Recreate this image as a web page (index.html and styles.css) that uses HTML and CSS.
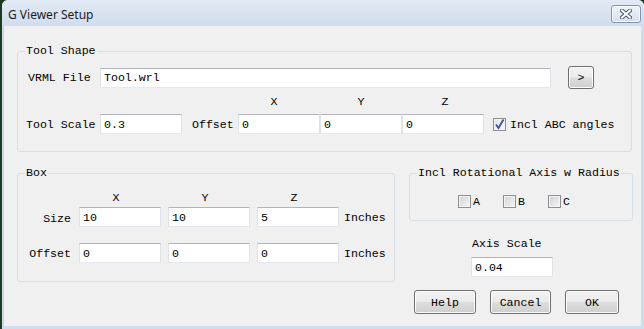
FILE: index.html
```html
<!DOCTYPE html>
<html>
<head>
    <title>G Viewer Setup</title>
    <link rel="stylesheet" href="styles.css">
</head>
<body>
    <div class="window">
        <div class="titlebar">
            <span class="title">G Viewer Setup</span>
            <span class="close">
                <svg width="12" height="10" viewBox="0 0 12 10">
                    <path d="M2 1.5 L10 8.5 M10 1.5 L2 8.5" stroke="#4c5a6c" stroke-width="4" stroke-linecap="square"/>
                    <path d="M2 1.5 L10 8.5 M10 1.5 L2 8.5" stroke="#ffffff" stroke-width="2" stroke-linecap="square"/>
                </svg>
            </span>
        </div>
        <div class="client">
            <fieldset class="group tool-shape">
                <legend>Tool Shape</legend>
                <div class="ts-row ts-file">
                    <label class="ts-label vrml">VRML File</label>
                    <input class="field file-field" type="text" value="Tool.wrl">
                    <button class="btn browse">&gt;</button>
                </div>
                <div class="ts-row ts-head">
                    <span class="ts-spacer"></span>
                    <span class="axis gap5">X</span>
                    <span class="axis gap2">Y</span>
                    <span class="axis">Z</span>
                </div>
                <div class="ts-row">
                    <label class="ts-label">Tool Scale</label>
                    <input class="field" type="text" value="0.3">
                    <label class="offset-label">Offset</label>
                    <input class="field gap5" type="text" value="0">
                    <input class="field gap2" type="text" value="0">
                    <input class="field" type="text" value="0">
                    <span class="check checked abc">
                        <svg width="11" height="11" viewBox="0 0 11 11">
                            <path d="M2 5.5 L4.5 9 L9.5 0.5" fill="none" stroke="#3d5590" stroke-width="1.8"/>
                        </svg>
                    </span>
                    <span class="check-text">Incl ABC angles</span>
                </div>
            </fieldset>

            <div class="lower">
                <fieldset class="group box">
                    <legend>Box</legend>
                    <div class="box-row box-head">
                        <span class="box-label"></span>
                        <span class="axis">X</span>
                        <span class="axis">Y</span>
                        <span class="axis">Z</span>
                    </div>
                    <div class="box-row">
                        <label class="box-label">Size</label>
                        <input class="field" type="text" value="10">
                        <input class="field" type="text" value="10">
                        <input class="field" type="text" value="5">
                        <span class="units">Inches</span>
                    </div>
                    <div class="box-row box-offset">
                        <label class="box-label">Offset</label>
                        <input class="field" type="text" value="0">
                        <input class="field" type="text" value="0">
                        <input class="field" type="text" value="0">
                        <span class="units">Inches</span>
                    </div>
                </fieldset>

                <div class="side">
                    <fieldset class="group rot">
                        <legend>Incl Rotational Axis w Radius</legend>
                        <div class="rot-row">
                            <span class="rot-item"><span class="check"></span>A</span>
                            <span class="rot-item"><span class="check"></span>B</span>
                            <span class="rot-item"><span class="check"></span>C</span>
                        </div>
                    </fieldset>
                    <div class="axis-scale">
                        <div class="axis-scale-label">Axis Scale</div>
                        <input class="field" type="text" value="0.04">
                    </div>
                    <div class="buttons">
                        <button class="btn help">Help</button>
                        <button class="btn cancel">Cancel</button>
                        <button class="btn ok">OK</button>
                    </div>
                </div>
            </div>
        </div>
    </div>
</body>
</html>
```

FILE: styles.css
```css
body { margin: 0; background: #1f3a22; font-family: "Liberation Mono", "Courier New", monospace; font-size: 11.6px; color: #000; }
.window { margin-left: 2px; height: 329px; background: #d0ddee; border-top-left-radius: 6px; border-top-right-radius: 6px; display: flex; flex-direction: column; }
.titlebar { height: 26px; display: flex; justify-content: space-between; align-items: flex-start; background: linear-gradient(#e2eaf5, #d0ddee); border-top-left-radius: 6px; border-top-right-radius: 6px; }
.title { font-family: "Noto Sans", "Open Sans", sans-serif; font-size: 12px; line-height: 22px; padding: 4px 0 0 6px; color: #1b1b1b; }
.close { width: 30px; height: 18px; box-sizing: border-box; margin: 5px 3px 0 0; border: 1px solid #8195ae; border-radius: 3px; background: linear-gradient(#eef3f9, #d6e1ee); display: flex; align-items: center; justify-content: center; box-shadow: inset 0 0 0 1px #f6f9fc; }
.client { flex: 1; margin: 0 3px 3px 1px; background: #f0f0f0; padding-left: 13px; border-left: 1px solid #c5d2e3; }

.group { margin: 0; padding: 0; border: 1px solid #d5dfe5; border-radius: 3px; min-width: 0; }
.group legend { margin-left: 7px; padding: 0 1px; line-height: 14px; white-space: nowrap; }

.tool-shape { width: 615px; box-sizing: border-box; margin-top: 18px; padding: 8px 0 17px 0; }
.ts-row { display: flex; align-items: center; padding-left: 8px; }
.ts-file { height: 23px; }
.ts-head { height: 25px; }
.ts-row:last-child { height: 20px; }
.ts-label { width: 74px; }
.ts-label.vrml { width: 72px; margin-left: 2px; }
.ts-spacer { width: 212px; }
.axis { width: 82px; box-sizing: border-box; text-align: center; padding-right: 10px; }
.gap5 { margin-right: 5px; }
.gap2 { margin-right: 2px; }
.offset-label { width: 56px; box-sizing: border-box; padding-left: 10px; }

.field { width: 82px; height: 20px; box-sizing: border-box; margin: 0; padding: 0 3px; font-family: inherit; font-size: inherit; color: #000; background: #fff; border: 1px solid; border-color: #b0b4bb #dfe3e9 #e3e9ef #dfe3e9; outline: none; }
.file-field { width: 451px; }

.btn { height: 24px; margin: 0; padding: 0; box-sizing: border-box; font-family: inherit; font-size: inherit; color: #000; border: 1px solid #707070; border-radius: 3px; background: linear-gradient(#f2f2f2 0%, #ebebeb 48%, #dddddd 52%, #cfcfcf 100%); box-shadow: inset 0 0 0 1px #fbfbfb; }
.browse { width: 26px; height: 23px; margin-left: 17px; }

.check { width: 13px; height: 13px; box-sizing: border-box; border: 1px solid #8e8f8f; background: linear-gradient(135deg, #cdd1d6, #f7f7f7); box-shadow: inset 0 0 0 1px #f4f4f4; display: flex; align-items: center; justify-content: center; }
.check.checked { background: linear-gradient(135deg, #dfe3ea, #fafafa); }
.abc { margin-left: 9px; }
.check-text { margin-left: 4px; }

.lower { display: flex; align-items: flex-start; gap: 14px; margin-top: 14px; }
.box { width: 378px; box-sizing: border-box; padding: 7px 0 18px 0; }
.box-row { display: flex; align-items: center; height: 20px; gap: 7px; }
.box-head .axis { padding-right: 8px; }
.box-label { width: 54px; box-sizing: border-box; text-align: right; padding-right: 1px; }
.box-row .box-label { padding-top: 3px; }
.box-offset { margin-top: 16px; }
.box-offset .box-label { padding-top: 0; }
.units { margin-left: -2px; }

.side { width: 224px; display: flex; flex-direction: column; }
.rot { padding: 15px 0 12px 0; }
.rot-row { display: flex; gap: 23px; height: 13px; align-items: center; padding-left: 48px; }
.rot-item { display: flex; align-items: center; gap: 2px; }
.axis-scale { padding-left: 62px; margin-top: 16px; }
.axis-scale-label { line-height: 14px; padding-left: 1px; margin-bottom: 6px; }
.buttons { display: flex; gap: 14px; margin-top: 13px; padding-left: 5px; }
.help { width: 62px; }
.cancel { width: 61px; }
.ok { width: 54px; }
```
